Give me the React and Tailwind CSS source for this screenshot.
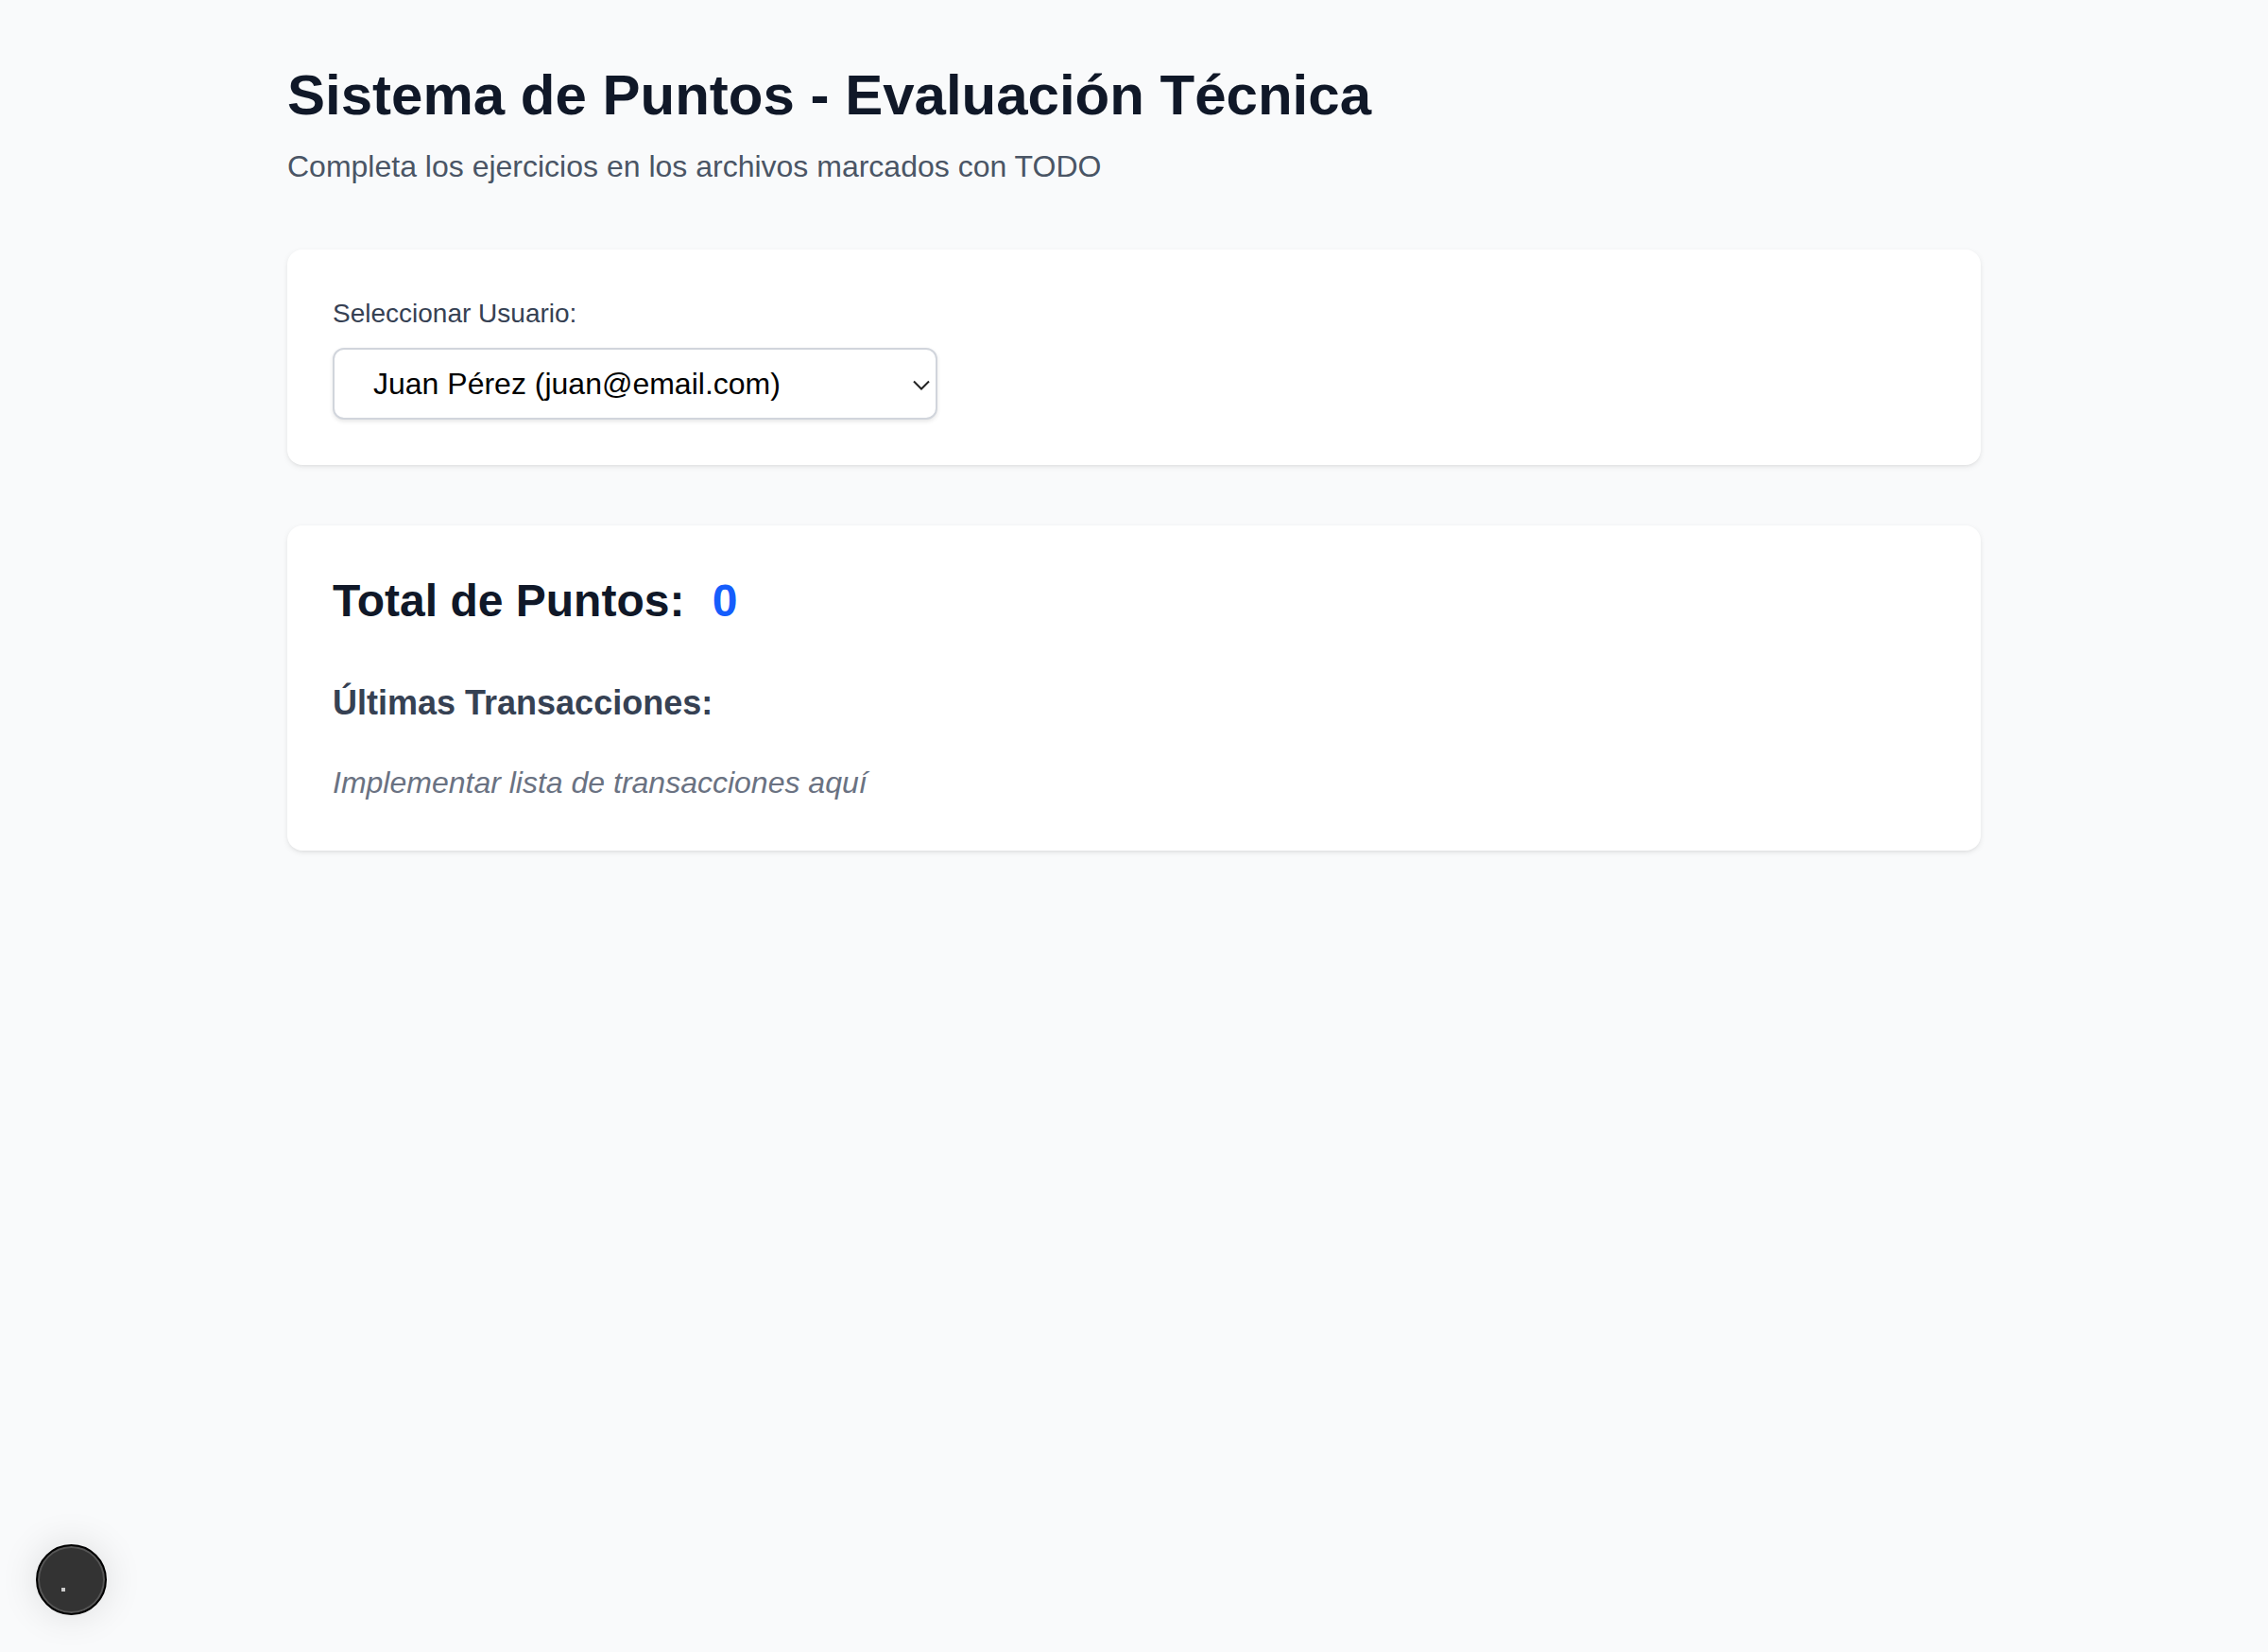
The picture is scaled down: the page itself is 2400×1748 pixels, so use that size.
import { useState } from 'react';

const users = [
  { id: 1, name: 'Juan Pérez', email: 'juan@email.com' },
  { id: 2, name: 'María García', email: 'maria@email.com' },
  { id: 3, name: 'Carlos López', email: 'carlos@email.com' },
];

export default function App() {
  const [userId, setUserId] = useState(1);
  const [transactions] = useState([]);
  const total = transactions.reduce((sum, t) => sum + t.points, 0);

  return (
    <div className="min-h-screen bg-gray-50 font-['Liberation_Sans',Arial,sans-serif]">
      <div className="max-w-[1792px] mx-auto pt-[65px]">
        <h1 className="text-[60px] leading-[72px] font-bold text-gray-900">
          Sistema de Puntos - Evaluación Técnica
        </h1>
        <p className="mt-[15px] text-[32px] leading-[48px] text-gray-600">
          Completa los ejercicios en los archivos marcados con TODO
        </p>

        <div className="mt-16 bg-white rounded-2xl p-12 shadow-[0_2px_6px_0_rgba(0,0,0,0.08),0_2px_4px_-2px_rgba(0,0,0,0.08)]">
          <label className="block text-[28px] leading-[40px] text-gray-700 mb-4">
            Seleccionar Usuario:
          </label>
          <div className="relative w-[640px]">
            <select
              value={userId}
              onChange={(e) => setUserId(Number(e.target.value))}
              className="block w-full h-[76px] appearance-none bg-white border-2 border-gray-300 rounded-xl pl-[41px] pr-16 text-[32px] text-black shadow-[0_2px_4px_rgba(0,0,0,0.1)] focus:outline-none"
            >
              {users.map((u) => (
                <option key={u.id} value={u.id}>
                  {u.name} ({u.email})
                </option>
              ))}
            </select>
            <svg
              className="absolute right-[8px] top-[34px] w-[18px] h-[11px] pointer-events-none"
              viewBox="0 0 18 11"
              fill="none"
              stroke="#222"
              strokeWidth="2"
            >
              <path d="M1 1.5 L9 9.5 L17 1.5" />
            </svg>
          </div>
        </div>

        <div className="mt-16 bg-white rounded-2xl p-12 shadow-[0_2px_6px_0_rgba(0,0,0,0.08),0_2px_4px_-2px_rgba(0,0,0,0.08)]">
          <h2 className="text-[48px] leading-[64px] font-bold text-gray-900 mb-12">
            Total de Puntos: <span className="ml-4 text-blue-600">{total}</span>
          </h2>
          <h3 className="text-[36px] leading-[56px] font-semibold text-gray-700 mb-8">
            Últimas Transacciones:
          </h3>
          <p className="text-[32px] leading-[48px] italic text-gray-500">
            Implementar lista de transacciones aquí
          </p>
        </div>
      </div>

      <button className="fixed left-[38px] bottom-[39px] w-[75px] h-[75px] rounded-full bg-[#333] border-2 border-black ring-2 ring-inset ring-[#555] shadow-[0_0_40px_rgba(0,0,0,0.12)] flex items-center justify-center">
        <span className="block w-[4px] h-[4px] bg-[#ccc] translate-x-[-9px] translate-y-[10px]" />
      </button>
    </div>
  );
}
